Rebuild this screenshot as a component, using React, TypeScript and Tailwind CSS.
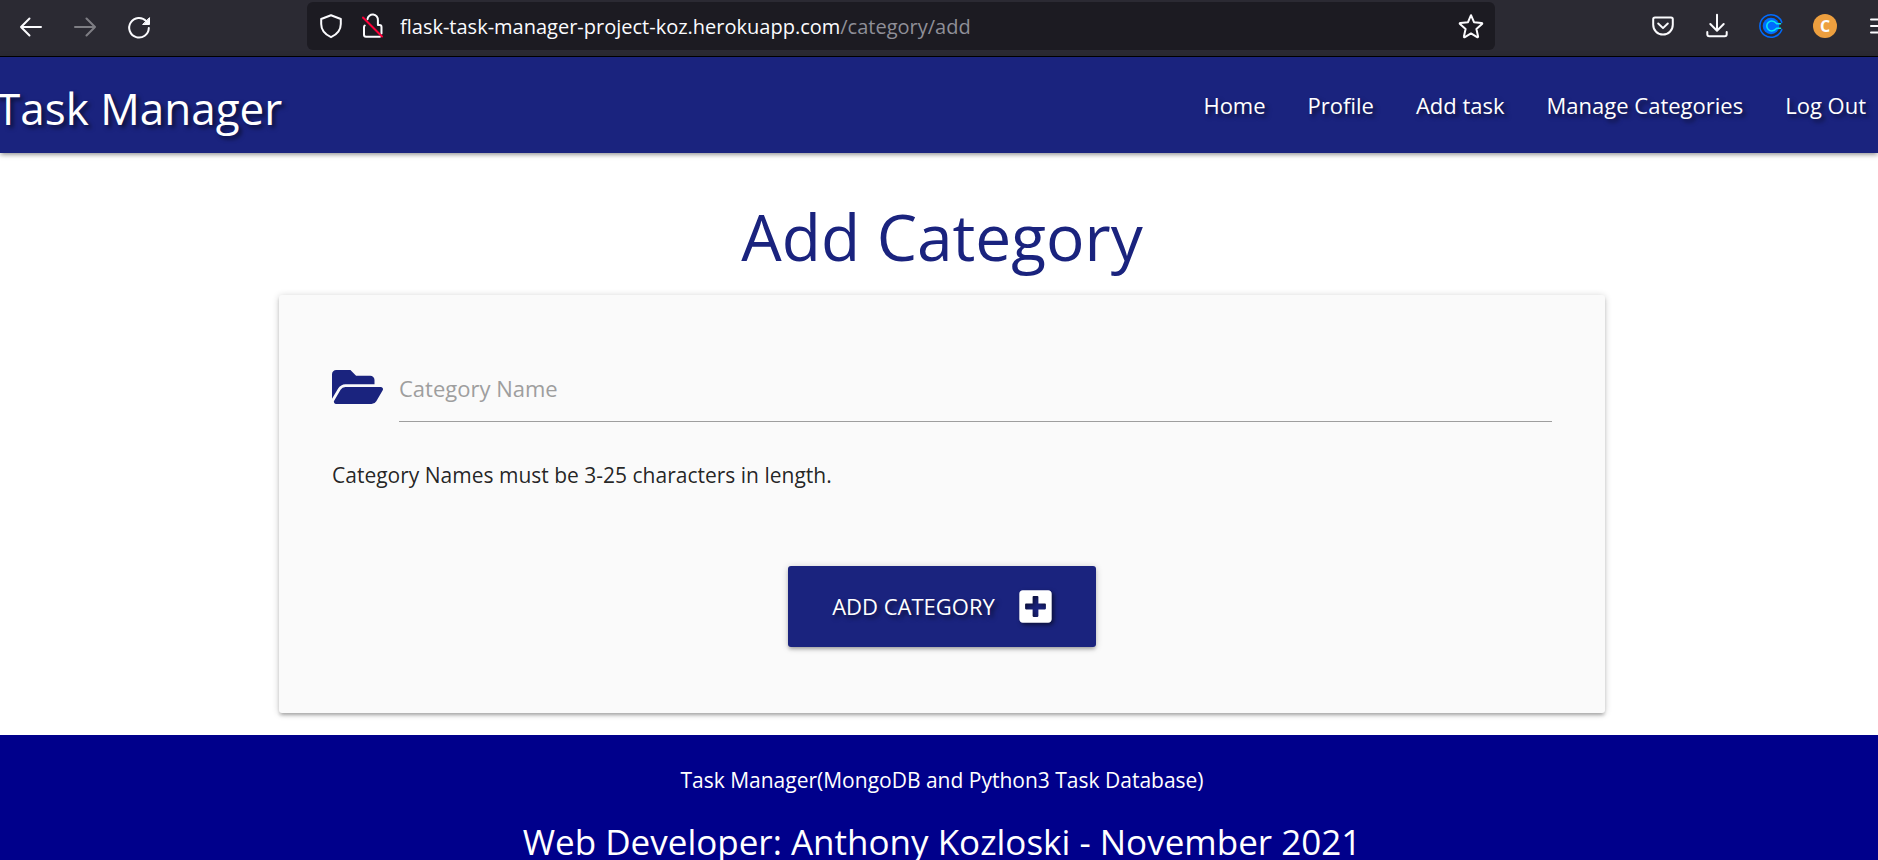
import type { ReactNode } from "react";
import { FaFolderOpen, FaPlusSquare } from "react-icons/fa";

const navLinks = [
  { label: "Home", href: "#home" },
  { label: "Profile", href: "#profile" },
  { label: "Add task", href: "#add-task" },
  { label: "Manage Categories", href: "#categories" },
  { label: "Log Out", href: "#logout" },
];

function ToolbarButton({ label, disabled, children }: { label: string; disabled?: boolean; children: ReactNode }) {
  return (
    <button type="button" aria-label={label} disabled={disabled} className="size-6 shrink-0 disabled:opacity-40">
      <svg
        viewBox="0 0 24 24"
        className="size-6 overflow-visible"
        fill="none"
        stroke="currentColor"
        strokeWidth="2"
        strokeLinecap="round"
        strokeLinejoin="round"
      >
        {children}
      </svg>
    </button>
  );
}

function BrowserToolbar() {
  return (
    <div className="flex h-[57px] shrink-0 items-start border-b border-black bg-[#2b2a33] pl-[19px] pt-[2px] text-[#fbfbfe]">
      <div className="flex h-12 w-72 shrink-0 items-center gap-[30px] pt-[2px]">
        <ToolbarButton label="Back">
          <path d="M22 12H2M10.500 3.500 2 12l8.500 8.500" />
        </ToolbarButton>
        <ToolbarButton label="Forward" disabled>
          <path d="M2 12h20M13.500 3.500 22 12l-8.500 8.500" />
        </ToolbarButton>
        <ToolbarButton label="Reload">
          <path d="M19.300 6.200A9.800 9.800 0 1 0 21.800 13" />
          <path d="M22.500 3v6.500H16z" fill="currentColor" strokeWidth="1" />
        </ToolbarButton>
      </div>

      <div className="flex h-12 min-w-0 grow items-center rounded-md bg-[#1c1b22] px-3">
        <ToolbarButton label="Tracking protection">
          <path d="M12 1.200 21.800 5v5c0 6-4 10.500-9.800 13.200C6.200 20.500 2.200 16 2.200 10V5z" />
        </ToolbarButton>
        <div className="ml-[18px] flex">
          <ToolbarButton label="Connection not secure">
            <path d="M6.500 5.200a5.200 5.200 0 0 1 10.400 1V11h1.600c1.200 0 2 .8 2 2v6.500M3.800 11.500c-.5.400-.8.900-.8 1.500v7.800C3 22 3.800 22.800 5 22.800h14" />
            <path d="M2 3.500 21 22.500" stroke="#ff0039" />
          </ToolbarButton>
        </div>
        <div
          role="textbox"
          aria-label="Address"
          contentEditable
          suppressContentEditableWarning
          className="ml-[15px] min-w-0 grow truncate pt-[2px] text-[20px] leading-8 outline-none"
        >
          flask-task-manager-project-koz.herokuapp.com<span className="text-[#8f8f98]">/category/add</span>
        </div>
        <ToolbarButton label="Bookmark">
          <path d="m12 1.200 3 7 7.500.7c.8.100 1 .7.500 1.200l-5.600 5 1.700 7.300c.1.700-.5 1-1 .7L12 19.400l-6.100 3.700c-.6.300-1.200 0-1-.7l1.700-7.300-5.600-5c-.6-.5-.3-1.100.4-1.200L9 8.200z" />
        </ToolbarButton>
      </div>

      <div className="ml-[156px] flex h-12 w-[227px] shrink-0 items-center gap-[30px] overflow-hidden">
        <ToolbarButton label="Save to Pocket">
          <path d="M4 3.500h16c1 0 1.800.8 1.800 1.800v5.500a9.800 9.800 0 0 1-19.600 0V5.300c0-1 .8-1.800 1.800-1.800zM7.200 9.500l4.800 4.600 4.800-4.600" />
        </ToolbarButton>
        <ToolbarButton label="Downloads">
          <path d="M12 .8v15.700M5.300 10l6.700 6.700 6.700-6.700M2.300 18v2.300c0 1.100.9 2 2 2h15.400c1.100 0 2-.9 2-2V18" />
        </ToolbarButton>
        <ToolbarButton label="Calendar extension">
          <circle cx="12" cy="12" r="8.300" fill="#006bff" stroke="none" />
          <path d="M22.800 8.200A11.300 11.300 0 1 0 22.800 15.800" stroke="#006bff" strokeWidth="1.500" />
          <path d="M21.500 9.700h-3.700c-1.600-1.700-3-2.700-5-2.700a5 5 0 0 0 0 10c2 0 3.400-1 5-2.700h3.700" stroke="#0ae8f0" strokeWidth="1.600" />
        </ToolbarButton>
        <button
          type="button"
          aria-label="Account"
          className="flex size-6 shrink-0 items-center justify-center rounded-full bg-[#ed9f3f] text-base font-bold leading-none"
        >
          C
        </button>
        <ToolbarButton label="Menu">
          <path d="M4 5.500h18M4 12h18M4 18.500h18" />
        </ToolbarButton>
      </div>
    </div>
  );
}

function SiteNav() {
  return (
    <nav className="relative flex h-24 shrink-0 items-center justify-between bg-[#1a237e] pr-3 text-white shadow-[0_3px_3px_rgba(0,0,0,0.14),0_4px_2px_-3px_rgba(0,0,0,0.12),0_1px_7px_rgba(0,0,0,0.2)] [text-shadow:3px_3px_4px_rgba(0,0,0,0.55)]">
      <a href="#home" className="-ml-1 whitespace-nowrap pt-[6px] text-[44px] leading-[60px]">
        Task Manager
      </a>
      <ul className="flex gap-[42px] whitespace-nowrap text-[22px] leading-8">
        {navLinks.map((link) => (
          <li key={link.label}>
            <a href={link.href}>{link.label}</a>
          </li>
        ))}
      </ul>
    </nav>
  );
}

function CategoryForm() {
  return (
    <form
      onSubmit={(event) => event.preventDefault()}
      className="mx-auto flex w-full max-w-[1326px] flex-col rounded-[3px] bg-[#fafafa] px-[53px] pb-[66px] pt-[69px] shadow-[0_3px_3px_rgba(0,0,0,0.14),0_4px_2px_-3px_rgba(0,0,0,0.12),0_1px_7px_rgba(0,0,0,0.2)]"
    >
      <div className="flex gap-4">
        <FaFolderOpen className="h-[46px] w-[51px] shrink-0 text-[#1a237e]" aria-hidden="true" />
        <div className="relative grow">
          <input
            id="category_name"
            type="text"
            minLength={3}
            maxLength={25}
            required
            placeholder=" "
            className="peer block h-[58px] w-full border-b border-[#9e9e9e] bg-transparent text-[22px] shadow-none outline-none"
          />
          <label
            htmlFor="category_name"
            className="absolute left-0 top-2 text-[22px] leading-8 text-[#9e9e9e] peer-focus:hidden peer-[:not(:placeholder-shown)]:hidden"
          >
            Category Name
          </label>
        </div>
      </div>
      <p className="mt-[37px] text-[21px] leading-8 text-black/87">Category Names must be 3-25 characters in length.</p>
      <button
        type="submit"
        className="mx-auto mt-[75px] flex h-[81px] items-center gap-6 rounded-[3px] bg-[#1a237e] px-11 text-[22px] uppercase text-white shadow-[0_3px_3px_rgba(0,0,0,0.14),0_4px_2px_-3px_rgba(0,0,0,0.12),0_1px_7px_rgba(0,0,0,0.2)] [text-shadow:3px_3px_4px_rgba(0,0,0,0.55)]"
      >
        Add Category
        <FaPlusSquare className="h-[37px] w-[33px] drop-shadow-[2px_2px_2px_rgba(0,0,0,0.55)]" aria-hidden="true" />
      </button>
    </form>
  );
}

export default function App() {
  return (
    <div className="flex h-screen flex-col overflow-hidden bg-white font-['Open_Sans','Noto_Sans',sans-serif]">
      <BrowserToolbar />
      <SiteNav />
      <main className="shrink-0 pb-[22px] pl-[6px] pt-12">
        <h1 className="pb-[22px] text-center text-[64px] leading-[72px] text-[#1a237e]">Add Category</h1>
        <CategoryForm />
      </main>
      <footer className="shrink-0 bg-[#00008b] pb-8 pl-[6px] pt-[29px] text-center text-white">
        <p className="text-[21px] leading-8">Task Manager(MongoDB and Python3 Task Database)</p>
        <p className="mt-5 text-[35px] leading-[52px]">Web Developer: Anthony Kozloski - November 2021</p>
      </footer>
    </div>
  );
}
